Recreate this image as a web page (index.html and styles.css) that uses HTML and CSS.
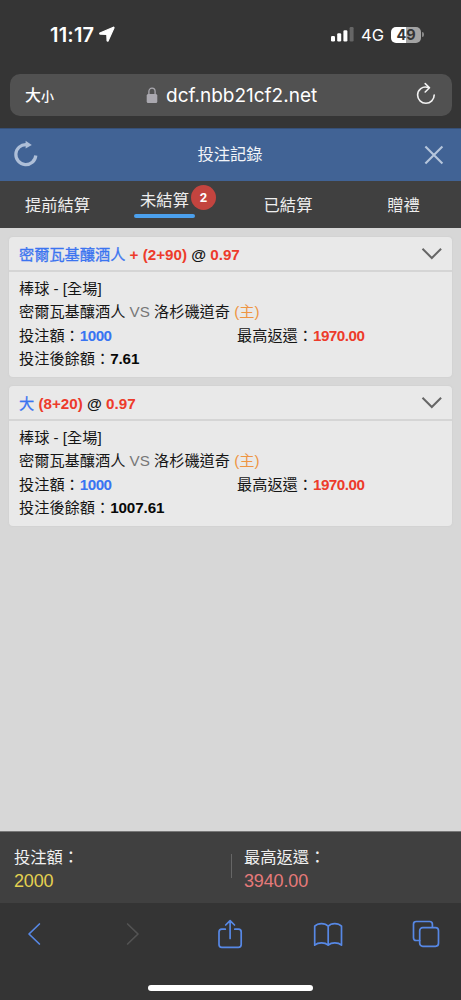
FILE: index.html
```
<!DOCTYPE html>
<html lang="zh-Hant">
<head>
<meta charset="utf-8">
<meta name="viewport" content="width=device-width, initial-scale=1">
<title>投注記錄</title>
<link rel="stylesheet" href="styles.css">
</head>
<body>
<div class="phone">
  <header class="browser">
    <div class="status">
      <div class="clock"><span>11:17</span>
        <svg width="16" height="16" viewBox="0 0 16 16"><path d="M14.4 1.200 1 7q-.7.6 0 1.100l6.800.200.300 6.500q.4.900 1.100 0L15 1.900q.1-.8-.6-.7Z" fill="#fff" stroke="#fff" stroke-width="1.200"/></svg>
      </div>
      <div class="signals">
        <svg width="23" height="15" viewBox="0 0 23 15"><rect y="9" width="4" height="5.5" rx="1.2" fill="#fff"/><rect x="6.2" y="6.2" width="4" height="8.3" rx="1.2" fill="#fff"/><rect x="12.4" y="3.2" width="4" height="11.3" rx="1.2" fill="#fff"/><rect x="18.6" width="4" height="14.5" rx="1.2" fill="#666"/></svg>
        <span class="network">4G</span>
        <span class="battery">49</span><span class="battery-tip"></span>
      </div>
    </div>
    <div class="address">
      <span class="text-size">大<small>小</small></span>
      <span class="domain"><svg width="12" height="17" viewBox="0 0 12 17"><path d="M2.9 8V4.5a3.1 3.4 0 0 1 6.2 0V8" fill="none" stroke="#aaa8af" stroke-width="1.3"/><rect x=".7" y="7" width="10.6" height="9" rx="1.5" fill="#aaa8af"/></svg>dcf.nbb21cf2.net</span>
      <svg class="reload" width="20" height="24" viewBox="0 0 20 24" fill="none" stroke="#f2f2f2" stroke-width="1.6" stroke-linecap="round" stroke-linejoin="round"><path d="M12.5 5.6C6.5 3.4 1.6 7.8 1.6 13a8.3 8.3 0 0 0 16.6 0M9.2 1.6l4.3 4.2-4.3 4.2"/></svg>
    </div>
  </header>
  <div class="titlebar">
    <svg class="refresh" width="26" height="28" viewBox="0 0 26 28"><path d="M13.3 4.6A10 10 0 1 0 22.8 15.5" fill="none" stroke="#aebfd8" stroke-width="3.2"/><path d="M12.6.8v7.8l6.2-3.6z" fill="#aebfd8"/></svg>
    <h1>投注記錄</h1>
    <svg width="20" height="20" viewBox="0 0 20 20"><path d="m1.4 1.6 17 17m0-17-17 17" stroke="#b6c6dc" stroke-width="2.1"/></svg>
  </div>
  <nav class="tabs">
    <span class="tab">提前結算</span>
    <span class="tab active"><span class="tab-label">未結算</span><b class="badge">2</b></span>
    <span class="tab">已結算</span>
    <span class="tab">贈禮</span>
  </nav>
  <main class="bets">
    <article class="bet">
      <div class="bet-head"><div><span class="pick">密爾瓦基釀酒人</span> <b class="red">+ (2+90)</b> <b>@</b> <b class="red">0.97</b></div>
        <svg width="22" height="14" viewBox="0 0 22 14"><path d="m1.5 1.8 9.3 9.2 9.3-9.2" fill="none" stroke="#666" stroke-width="2"/></svg></div>
      <div class="bet-body">
        <div>棒球 - [全場]</div>
        <div>密爾瓦基釀酒人 <span class="vs">VS</span> 洛杉磯道奇 <span class="home">(主)</span></div>
        <div class="amounts"><span>投注額：<b class="blue num">1000</b></span><span>最高返還：<b class="red num">1970.00</b></span></div>
        <div>投注後餘額：<b class="balance">7.61</b></div>
      </div>
    </article>
    <article class="bet">
      <div class="bet-head"><div><span class="pick">大</span> <b class="red">(8+20)</b> <b>@</b> <b class="red">0.97</b></div>
        <svg width="22" height="14" viewBox="0 0 22 14"><path d="m1.5 1.8 9.3 9.2 9.3-9.2" fill="none" stroke="#666" stroke-width="2"/></svg></div>
      <div class="bet-body">
        <div>棒球 - [全場]</div>
        <div>密爾瓦基釀酒人 <span class="vs">VS</span> 洛杉磯道奇 <span class="home">(主)</span></div>
        <div class="amounts"><span>投注額：<b class="blue num">1000</b></span><span>最高返還：<b class="red num">1970.00</b></span></div>
        <div>投注後餘額：<b class="balance">1007.61</b></div>
      </div>
    </article>
  </main>
  <section class="totals">
    <div class="total"><span>投注額：</span><span class="stake">2000</span></div>
    <i class="divider"></i>
    <div class="total"><span>最高返還：</span><span class="payout">3940.00</span></div>
  </section>
  <footer class="toolbar">
    <div class="tools">
      <svg width="14" height="24" viewBox="0 0 14 24"><path d="M12.4 2 2 12l10.4 10"/></svg>
      <svg class="disabled" width="14" height="24" viewBox="0 0 14 24"><path d="m1.6 2 10.4 10L1.6 22"/></svg>
      <svg width="26" height="30" viewBox="0 0 26 30"><path d="M8.3 10.2H4.8Q2 10.2 2 13v12.6q0 2.8 2.8 2.8h16.6q2.8 0 2.8-2.8V13q0-2.8-2.8-2.8h-3.6M13.1 19.5V1.8M8.7 6l4.4-4.4L17.5 6"/></svg>
      <svg class="book" width="30" height="26" viewBox="0 0 30 26"><path d="M15.200 4.200C12 .7 5 .7 1.700 4.200v19c3.600-3 10-3 13.500 0 3.400-3 9.800-3 13.300 0v-19C25.200.7 18.300.7 15.200 4.200v19"/></svg>
      <svg width="28" height="28" viewBox="0 0 28 28"><path d="M7.7 20.500H4.200q-2.700 0-2.700-2.700V4.200q0-2.700 2.700-2.700h13.500q2.700 0 2.700 2.700V7"/><rect x="7.700" y="7.700" width="18.800" height="18.600" rx="3"/></svg>
    </div>
    <div class="home-bar"></div>
  </footer>
</div>
</body>
</html>
```
FILE: styles.css
```
* { box-sizing: border-box; }
body { margin: 0; font-family: "Liberation Sans", "Noto Sans CJK TC", sans-serif; }
svg { display: block; flex: none; }
.phone { width: 461px; height: 1000px; display: flex; flex-direction: column; background: #d7d7d7; overflow: hidden; white-space: nowrap; }
.browser { height: 128px; flex: none; background: #353535; color: #fff; padding: 20px 9px 0 10px; }
.status { height: 54px; display: flex; justify-content: space-between; padding: 0 28px 0 40px; font-family: Inter, sans-serif; }
.clock { height: 29px; display: flex; align-items: center; gap: 5px; font-size: 20px; font-weight: 600; letter-spacing: .2px; }
.clock svg { margin-top: -1px; }
.signals { height: 29px; display: flex; align-items: center; }
.network { font-size: 16.500px; margin-left: 7px; width: 30px; }
.battery { width: 30px; height: 16px; border-radius: 5px; background: linear-gradient(90deg, #fff 50%, #a3a3a3 50%); color: #353535; font-size: 14.500px; line-height: 16px; font-weight: 700; text-align: center; }
.battery-tip { width: 2px; height: 5px; border-radius: 0 2px 2px 0; margin-left: 1px; background: #888; }
.address { height: 42px; border-radius: 10px; background: #515151; display: grid; grid-template-columns: 121px 1fr 20px; align-items: center; padding: 0 16px 0 15px; }
.text-size { font: 500 16px/24px "Noto Sans CJK TC", sans-serif; }
.text-size small { font-size: 13px; }
.domain { display: flex; align-items: center; gap: 8px; font-family: Inter, sans-serif; font-size: 19px; }
.reload { margin-top: -3px; }
.titlebar { height: 53px; flex: none; display: flex; align-items: center; justify-content: space-between; padding: 0 17px 0 13px; background: #416395; border-top: 1px solid #365078; color: #f1f4f8; }
.titlebar h1 { margin: -4px 3px 0 0; font-size: 16.300px; font-weight: 400; }
.refresh { margin-top: -2px; }
.tabs { height: 47px; flex: none; display: grid; grid-template-columns: 115px 115px 116px 115px; background: #404040; color: #eee; font-size: 16.300px; }
.tab { display: flex; align-items: center; justify-content: center; padding-bottom: 1px; }
.active { position: relative; align-items: flex-start; padding: 6px 0 0 0; }
.tab-label { width: 61px; line-height: 27px; text-align: center; margin-right: 16px; }
.tab-label::after { content: ""; display: block; height: 4px; border-radius: 2px; background: #4ba0ed; }
.badge { position: absolute; left: 76px; top: 4px; width: 25px; height: 25px; border-radius: 50%; background: #c3443f; color: #fff; font: 700 13px/25px Roboto, sans-serif; text-align: center; }
.bets { flex: 1; padding: 9px 9px 0; display: flex; flex-direction: column; gap: 9px; }
.bet { height: 140px; border-radius: 4px; background: #e9e9e9; box-shadow: 0 0 2px #cacaca; color: #151515; font-size: 15.200px; }
.bet-head { height: 35px; border-bottom: 2px solid #d5d5d5; display: flex; align-items: center; justify-content: space-between; padding: 0 9px 2px 10px; }
.bet-head svg { margin-top: 2px; }
.bet-body { padding: 4.600px 10px 0; line-height: 23.500px; }
.bet-body > div { height: 23.500px; }
.pick { color: #3b74f0; -webkit-text-stroke: .3px #3b74f0; }
.red { color: #ed3b2b; }
.blue { color: #3874f2; }
.num { letter-spacing: -.5px; }
.balance { letter-spacing: -.1px; color: #080808; }
.vs { color: #777; }
.home { color: #ee9543; }
.amounts { display: grid; grid-template-columns: 218px 1fr; }
.totals { height: 72px; flex: none; display: grid; grid-template-columns: 217px 13px 1fr; align-items: center; padding: 0 0 0 14px; background: #404040; border-top: 1px solid #777; color: #f0f0f0; }
.total { display: flex; flex-direction: column; font-size: 16.300px; line-height: 24px; padding-top: 3px; }
.stake, .payout { font-size: 18px; letter-spacing: -.15px; }
.stake { color: #e4d050; }
.payout { color: #e67a7a; }
.divider { width: 1px; height: 24px; margin-top: -3px; background: #666; }
.toolbar { height: 97px; flex: none; background: #343434; }
.tools { height: 79px; display: grid; grid-template-columns: 100px 98px 97px 98px 98px; justify-content: center; justify-items: center; align-items: center; padding: 0 3px 17px 0; }
.tools svg { fill: none; stroke: #5788e5; stroke-width: 1.7; stroke-linecap: round; stroke-linejoin: round; }
.tools .disabled { stroke: #535353; }
.tools .book { margin-top: 2px; }
.home-bar { width: 165px; height: 6px; margin: 3px auto 0; border-radius: 3px; background: #fff; }
```
